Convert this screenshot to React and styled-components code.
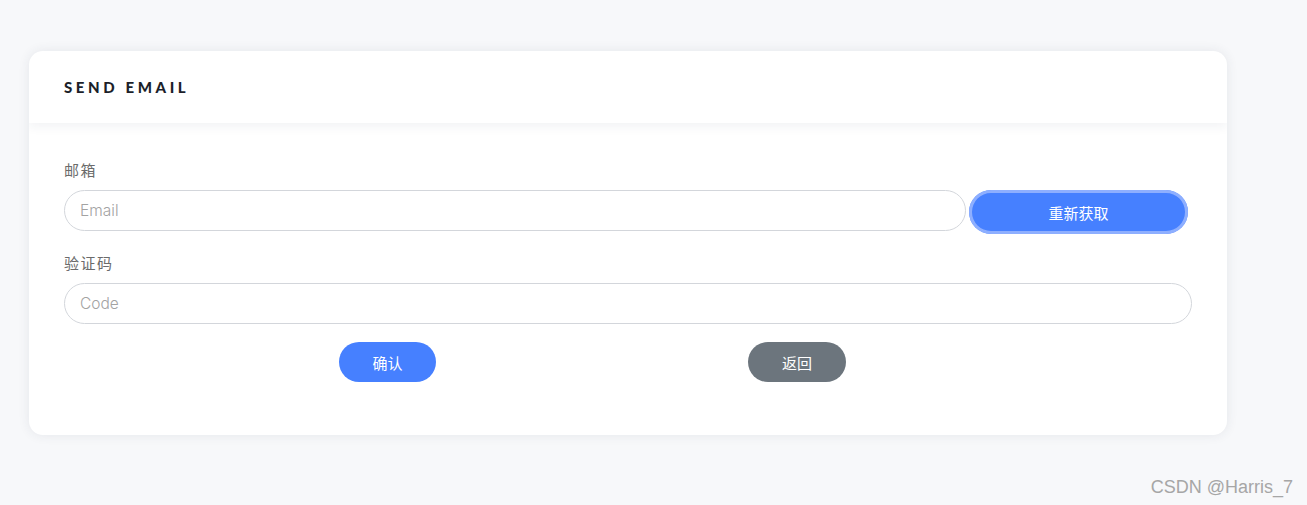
import React from "react";
import styled, { createGlobalStyle } from "styled-components";

const GlobalStyle = createGlobalStyle`
  html, body {
    margin: 0;
    padding: 0;
    background: #f7f8fa;
    font-family: "Open Sans", "Noto Sans CJK SC", sans-serif;
  }
`;

const Page = styled.div`
  position: relative;
  height: 505px;
  padding: 51px 80px 0 29px;
  box-sizing: border-box;
`;

const Card = styled.div`
  width: 1198px;
  background: #ffffff;
  border-radius: 14px;
  box-shadow: 0 0 12px rgba(40, 50, 80, 0.09);
  overflow: hidden;
`;

const CardHeader = styled.div`
  height: 72px;
  display: flex;
  align-items: center;
  padding-left: 35px;
  box-shadow: 0 4px 10px rgba(40, 50, 80, 0.06);
  position: relative;
`;

const Title = styled.h5`
  margin: 0;
  font-family: "Lato", "Noto Sans", sans-serif;
  font-weight: 900;
  font-size: 15px;
  letter-spacing: 3.6px;
  color: #1c1f2a;
`;

const CardBody = styled.div`
  padding: 36px 35px 53px 35px;
`;

const Label = styled.label`
  display: block;
  font-family: "Noto Sans CJK SC", sans-serif;
  font-size: 15px;
  color: #6b6b6b;
  letter-spacing: 1.5px;
  line-height: 21px;
  margin-bottom: 10px;
`;

const Row = styled.div`
  display: flex;
  align-items: flex-start;
  gap: 3px;
  margin-bottom: 18px;
`;

const Input = styled.input`
  flex: 1;
  height: 41px;
  box-sizing: border-box;
  border: 1px solid #d3d6db;
  border-radius: 21px;
  padding: 0 15px;
  font-family: "Inter", "Open Sans", sans-serif;
  font-weight: 300;
  font-size: 15.5px;
  color: #333;
  outline: none;
  &::placeholder {
    color: #a3a3a3;
  }
`;

const Button = styled.button`
  height: ${(p) => (p.$tall ? "44px" : "40px")};
  width: ${(p) => p.$w || "97px"};
  border: none;
  border-radius: 22px;
  background: ${(p) => (p.$grey ? "#6c757d" : "#4680ff")};
  color: #ffffff;
  font-family: "Noto Sans CJK SC", sans-serif;
  font-size: 15px;
  cursor: pointer;
  box-shadow: ${(p) => (p.$focus ? "inset 0 0 0 3px rgba(150, 180, 255, 0.9)" : "none")};
`;

const ActionRow = styled.div`
  display: flex;
  padding-left: 275px;
  gap: 312px;
`;

const Spacer = styled.div`
  width: 1px;
`;

const Watermark = styled.div`
  position: absolute;
  right: 14px;
  bottom: 7px;
  font-family: "Liberation Sans", Arial, sans-serif;
  font-size: 18px;
  color: #a6a6a6;
`;

export default function App() {
  return (
    <>
      <GlobalStyle />
      <Page>
        <Card>
          <CardHeader>
            <Title>SEND EMAIL</Title>
          </CardHeader>
          <CardBody>
            <Label>邮箱</Label>
            <Row>
              <Input placeholder="Email" />
              <Button $tall $focus $w="219px">重新获取</Button>
              <Spacer />
            </Row>
            <Label>验证码</Label>
            <Row>
              <Input placeholder="Code" />
            </Row>
            <ActionRow>
              <Button>确认</Button>
              <Button $grey $w="98px">返回</Button>
            </ActionRow>
          </CardBody>
        </Card>
        <Watermark>CSDN @Harris_7</Watermark>
      </Page>
    </>
  );
}
